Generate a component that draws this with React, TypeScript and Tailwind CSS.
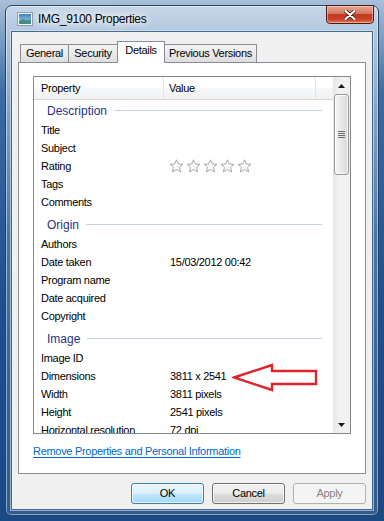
import React from "react";

type Row = { label: string; value?: string; stars?: boolean };
type Group = { name: string; rows: Row[] };

const GROUPS: Group[] = [
  {
    name: "Description",
    rows: [{ label: "Title" }, { label: "Subject" }, { label: "Rating", stars: true }, { label: "Tags" }, { label: "Comments" }],
  },
  {
    name: "Origin",
    rows: [
      { label: "Authors" },
      { label: "Date taken", value: "15/03/2012 00:42" },
      { label: "Program name" },
      { label: "Date acquired" },
      { label: "Copyright" },
    ],
  },
  {
    name: "Image",
    rows: [
      { label: "Image ID" },
      { label: "Dimensions", value: "3811 x 2541" },
      { label: "Width", value: "3811 pixels" },
      { label: "Height", value: "2541 pixels" },
      { label: "Horizontal resolution", value: "72 dpi" },
    ],
  },
];

function Star() {
  return (
    <svg width="15" height="14" viewBox="0 0 15 14">
      <path
        d="M7.5 0.8 L9.4 5 L13.9 5.3 L10.5 8.3 L11.6 12.9 L7.5 10.5 L3.4 12.9 L4.5 8.3 L1.1 5.3 L5.6 5 Z"
        fill="#fbfbfb"
        stroke="#a6a6a6"
        strokeWidth="1"
        strokeLinejoin="round"
      />
    </svg>
  );
}

function PictureIcon() {
  return (
    <svg width="16" height="14" viewBox="0 0 16 14">
      <rect x="0.5" y="0.5" width="15" height="13" fill="#f4f7fa" stroke="#8f9aa6" />
      <defs>
        <linearGradient id="sky" x1="0" y1="0" x2="0" y2="1">
          <stop offset="0" stopColor="#3d7fc4" />
          <stop offset="1" stopColor="#b7d6ee" />
        </linearGradient>
      </defs>
      <rect x="2" y="2" width="12" height="10" fill="url(#sky)" />
      <path d="M2 9 L6 7 L10 8.5 L14 7 L14 12 L2 12 Z" fill="#3f8f86" />
    </svg>
  );
}

function TabBtn({ label, width, active }: { label: string; width: number; active?: boolean }) {
  if (active) {
    return (
      <div
        className="relative z-10 -ml-px -mb-px h-[22px] bg-white border border-b-0 border-[#898c95] flex items-start justify-center pt-[3px] text-black"
        style={{ width }}
      >
        {label}
      </div>
    );
  }
  return (
    <div
      className="-ml-px first:ml-0 h-[18px] border border-b-0 border-[#898c95] bg-[linear-gradient(to_bottom,#f2f2f2,#ebebeb_50%,#dddddd)] flex items-center justify-center text-black"
      style={{ width }}
    >
      {label}
    </div>
  );
}

function Arrow({ dir }: { dir: "up" | "down" }) {
  return (
    <div className="h-[17px] flex items-center justify-center">
      <svg width="7" height="4" viewBox="0 0 7 4">
        {dir === "up" ? <path d="M0 4 L3.5 0 L7 4 Z" fill="#1a1a1a" /> : <path d="M0 0 L3.5 4 L7 0 Z" fill="#1a1a1a" />}
      </svg>
    </div>
  );
}

function ScrollBar() {
  return (
    <div className="w-[17px] shrink-0 flex flex-col bg-[linear-gradient(to_right,#e6e6e6,#f2f2f2_40%,#f0f0f0)]">
      <Arrow dir="up" />
      <div className="mx-[1px] h-[81px] rounded-[3px] border border-[#979797] bg-[linear-gradient(to_right,#f5f5f5,#e8e8e8_50%,#d7d7d7)] shadow-[inset_0_0_0_1px_rgba(255,255,255,0.8)] flex flex-col items-center justify-center gap-[1px]">
        <div className="w-[7px] h-px bg-[#6b6b6b]" />
        <div className="w-[7px] h-px bg-[#6b6b6b]" />
        <div className="w-[7px] h-px bg-[#6b6b6b]" />
        <div className="w-[7px] h-px bg-[#6b6b6b]" />
      </div>
      <div className="flex-1" />
      <Arrow dir="down" />
    </div>
  );
}

export default function App() {
  return (
    <div className="w-[384px] h-[521px] p-[5px] bg-[linear-gradient(to_bottom,#a9c0d9,#3a6ba3_18%,#1d4f8c_60%,#1a4a86)] font-['Liberation_Sans',Arial,sans-serif] text-[11px] tracking-[-0.3px] leading-none overflow-hidden">
      <div className="h-full rounded-t-[7px] rounded-b-[6px] border border-[#2a4463] bg-[linear-gradient(to_bottom,#c7d7e9,#b2c8df_5%,#7fa1c6_22%,#4a77a8_45%,#35639a_75%,#2f5c91)] shadow-[inset_0_0_0_1px_rgba(255,255,255,0.45)] flex flex-col px-[5px] pb-[5px]">
        {/* title bar */}
        <div className="relative h-[25px] flex items-center pl-[6px] pt-[1px]">
          <PictureIcon />
          <span className="ml-[5px] text-[12px] text-black [text-shadow:0_0_6px_#fff,0_0_10px_#fff,0_0_14px_#fff]">
            IMG_9100 Properties
          </span>
          <div className="absolute right-[-1px] top-[-1px] w-[48px] h-[19px] rounded-b-[4px] border border-[#4a1b14] bg-[linear-gradient(to_bottom,#e9a897,#d47560_45%,#c3391f_50%,#c8442a_80%,#e07a55)] shadow-[inset_0_0_0_1px_rgba(255,220,210,0.5)] flex items-center justify-center">
            <svg width="12" height="10" viewBox="0 0 12 10">
              <path d="M1.5 1 L10.5 9 M10.5 1 L1.5 9" stroke="#3a1a16" strokeWidth="3.6" strokeLinecap="round" />
              <path d="M1.5 1 L10.5 9 M10.5 1 L1.5 9" stroke="#ffffff" strokeWidth="2.2" strokeLinecap="round" />
            </svg>
          </div>
        </div>

        {/* client area */}
        <div className="flex-1 bg-[#f0f0f0] border border-[#45688f] shadow-[0_0_0_1px_rgba(220,232,245,0.6)] flex flex-col px-[6px]">
          {/* tabs */}
          <div className="flex items-end pl-[2px] pt-[9px] relative">
            <TabBtn label="General" width={49} />
            <TabBtn label="Security" width={50} />
            <TabBtn label="Details" width={48} active />
            <TabBtn label="Previous Versions" width={93} />
          </div>

          {/* panel */}
          <div className="h-[412px] bg-white border border-[#898c95] px-[14px] pt-[13px]">
            <div className="relative h-[358px] border border-[#828790] flex">
              <div className="flex-1 overflow-hidden flex flex-col">
                {/* header */}
                <div className="h-[23px] shrink-0 flex border-b border-[#d5d5d5] bg-[linear-gradient(to_bottom,#ffffff,#ffffff_50%,#f6f7f9_52%,#f1f2f4)]">
                  <div className="w-[130px] border-r border-[#e3e4e6] pl-[7px] flex items-center text-black">Property</div>
                  <div className="w-[152px] border-r border-[#e3e4e6] pl-[5px] flex items-center text-black">Value</div>
                  <div className="flex-1" />
                </div>
                {/* body */}
                {GROUPS.map((g, gi) => (
                  <div key={g.name} className={gi === 0 ? "" : "mt-[3px]"}>
                    <div className="h-[21px] flex items-center pl-[13px] pr-[11px] gap-[7px]">
                      <span className="text-[12px] tracking-normal text-[#1e3287]">{g.name}</span>
                      <div className="flex-1 h-px bg-[#c4d0de]" />
                    </div>
                    {g.rows.map((r) => (
                      <div key={r.label} className="h-[18px] flex items-center text-black">
                        <div className="w-[131px] pl-[7px] whitespace-nowrap">{r.label}</div>
                        <div className="pl-[5px] flex items-center whitespace-nowrap">
                          {r.stars ? (
                            <div className="flex gap-[2px] -ml-[1px]">
                              <Star />
                              <Star />
                              <Star />
                              <Star />
                              <Star />
                            </div>
                          ) : (
                            r.value
                          )}
                        </div>
                      </div>
                    ))}
                  </div>
                ))}
              </div>
              <ScrollBar />

              {/* red annotation arrow */}
              <svg className="absolute left-[198px] top-[286px]" width="88" height="30" viewBox="0 0 88 30">
                <path
                  d="M2 14.5 L40 2 L40 8 L84 8 L84 21 L40 21 L40 27 Z"
                  fill="#ffffff"
                  stroke="#e0242b"
                  strokeWidth="2.4"
                  strokeLinejoin="miter"
                />
              </svg>
            </div>

            <div className="mt-[12px] text-[#0066cc] underline underline-offset-[2px] whitespace-nowrap">
              Remove Properties and Personal Information
            </div>
          </div>

          {/* buttons */}
          <div className="flex justify-end gap-[8px] mt-[9px] pr-[0px]">
            <div className="w-[73px] h-[21px] rounded-[3px] border border-[#3c7fb1] bg-[linear-gradient(to_bottom,#eaf6fd,#d9f0fc_50%,#bee6fd_51%,#a7d9f5)] shadow-[inset_0_0_0_1px_rgba(255,255,255,0.7)] flex items-center justify-center text-black">
              OK
            </div>
            <div className="w-[73px] h-[21px] rounded-[3px] border border-[#707070] bg-[linear-gradient(to_bottom,#f2f2f2,#ebebeb_50%,#dddddd_51%,#cfcfcf)] shadow-[inset_0_0_0_1px_rgba(255,255,255,0.7)] flex items-center justify-center text-black">
              Cancel
            </div>
            <div className="w-[73px] h-[21px] rounded-[3px] border border-[#adb2b5] bg-[#f4f4f4] flex items-center justify-center text-[#838383]">
              Apply
            </div>
          </div>
        </div>
      </div>
    </div>
  );
}
